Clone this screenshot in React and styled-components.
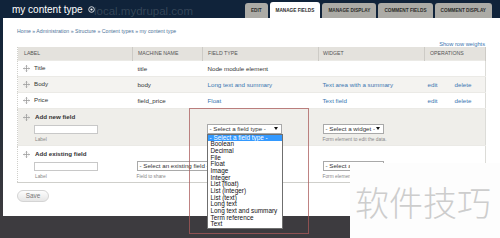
import React from 'react';
import styled, { createGlobalStyle } from 'styled-components';

const Global = createGlobalStyle`
  html, body { margin: 0; padding: 0; }
  body {
    width: 500px; height: 238px; overflow: hidden; background: #3d3b3f;
    font-family: "Liberation Sans", Arial, sans-serif;
  }
  * { box-sizing: border-box; }
`;

const Page = styled.div`
  position: relative;
  width: 500px;
  height: 238px;
  overflow: hidden;
  display: flex;
  flex-direction: column;
  background: linear-gradient(#10233a 0, #10233a 18px, #1f2a36 90px, #3d3b3f 216px);
`;

const Header = styled.header`
  flex: none;
  height: 18px;
  display: flex;
  justify-content: space-between;
  align-items: flex-end;
  padding: 0 8px 0 12px;
`;

const Title = styled.h1`
  margin: 0;
  align-self: center;
  padding-top: 1px;
  display: flex;
  align-items: center;
  gap: 5px;
  color: #fff;
  font-size: 10px;
  font-weight: normal;
  line-height: 10px;
`;

const Tabs = styled.nav`
  display: flex;
  align-items: flex-end;
  gap: 2px;
`;

const Tab = styled.a`
  height: ${p => (p.$active ? 16 : 15)}px;
  padding: 0 6px;
  display: flex;
  align-items: center;
  background: ${p => (p.$active ? '#fff' : '#acaba6')};
  color: #2b2b2b;
  font-size: 4.7px;
  font-weight: bold;
  text-transform: uppercase;
  border-radius: 3px 3px 0 0;
  white-space: nowrap;
`;

const Panel = styled.main`
  flex: none;
  margin-left: 3px;
  height: 198px;
  background: #fff;
  padding: 10px 15px 0 14px;
`;

const Breadcrumb = styled.div`
  font-size: 5.2px;
  line-height: 6px;
  color: #4d7299;
  margin-bottom: 7px;
  white-space: nowrap;
`;

const WeightsLink = styled.div`
  text-align: right;
  font-size: 5.7px;
  line-height: 6px;
  color: #3a76b0;
`;

const Table = styled.table`
  width: 468px;
  table-layout: fixed;
  border-collapse: collapse;
  font-size: 6.2px;
  color: #333;
  border-left: 1px dotted #cfcfcb;
  border-right: 1px solid #dcdcd8;
  border-bottom: 1px solid #cfcfcb;
`;

const Col = styled.col`
  width: ${p => p.$w}px;
`;

const Th = styled.th`
  height: 13px;
  padding: 0 0 0 ${p => p.$pl ?? 5}px;
  background: #e4e2dd;
  border-right: 1px solid #cdcbc6;
  text-align: left;
  font-weight: normal;
  font-size: 5.2px;
  color: #555;
  text-transform: uppercase;
  white-space: nowrap;
`;

const Tr = styled.tr`
  background: ${p => p.$bg || '#fff'};
  border-top: 1px solid #ebeae6;
`;

const Td = styled.td`
  height: ${p => p.$h || 16}px;
  padding: ${p => (p.$top ? '5px' : '0')} 0 0 ${p => p.$pl ?? 5}px;
  vertical-align: ${p => (p.$top ? 'top' : 'middle')};
  white-space: nowrap;
  overflow: visible;
  color: ${p => (p.$link ? '#3a76b0' : '#333')};
`;

const LabelLine = styled.div`
  display: flex;
  align-items: center;
  gap: ${p => p.$gap ?? 5}px;
  padding-left: 5px;
  line-height: 6px;
  font-weight: ${p => (p.$bold ? 'bold' : 'normal')};
  color: #333;
`;

const FormBlock = styled.div`
  padding-left: 16px;
  margin-top: 4px;
`;

const TextInput = styled.div`
  width: 64px;
  height: 9px;
  border: 1px solid #c8c8c8;
  background: #fff;
`;

const Desc = styled.div`
  margin-top: 3px;
  font-size: 4.8px;
  line-height: 5px;
  color: #888;
  padding-left: ${p => p.$pl ?? 1}px;
  white-space: nowrap;
`;

const FieldSpacer = styled.div`
  height: 10px;
`;

const SelectWrap = styled.div`
  position: relative;
  width: ${p => p.$w}px;
`;

const SelectBox = styled.div`
  height: 10px;
  border: 1px solid #a9a9a9;
  background: #fff;
  display: flex;
  align-items: center;
  justify-content: space-between;
  padding: 0 3px 0 2px;
  font-size: 6.2px;
  color: #333;
  white-space: nowrap;
  overflow: hidden;
`;

const ListBox = styled.ul`
  position: absolute;
  left: 0;
  top: 100%;
  z-index: 5;
  width: 76px;
  margin: 0;
  padding: 0;
  list-style: none;
  background: #fff;
  border: 1px solid #6f6f6f;
  font-size: 6.4px;
`;

const Option = styled.li`
  height: 6.7px;
  line-height: 6.7px;
  padding-left: ${p => (p.$sel ? 2 : 3)}px;
  background: ${p => (p.$sel ? '#3399ff' : 'transparent')};
  color: ${p => (p.$sel ? '#fff' : '#111')};
  white-space: nowrap;
`;

const SaveButton = styled.button`
  margin-top: 7px;
  width: 32px;
  height: 12px;
  padding: 0;
  border: 1px solid #d4d4d4;
  border-radius: 6px;
  background: linear-gradient(#fdfdfd, #e6e6e6);
  color: #777;
  font-family: inherit;
  font-size: 6.4px;
`;

const Annotation = styled.div`
  position: absolute;
  left: 189px;
  top: 108px;
  width: 120px;
  height: 126px;
  border: 1px solid rgba(170, 90, 90, 0.75);
  z-index: 6;
  pointer-events: none;
`;

const HostMark = styled.div`
  position: absolute;
  left: 94px;
  top: 5px;
  font-size: 11.5px;
  color: rgba(190, 195, 200, 0.22);
  z-index: 7;
  pointer-events: none;
`;

const Watermark = styled.div`
  position: absolute;
  left: 350px;
  top: 163px;
  right: 0;
  bottom: 0;
  z-index: 8;
  background: #fdfdfd;
  padding: 19px 0 0 5px;
  font-family: "Noto Sans CJK SC", sans-serif;
  font-size: 34px;
  font-weight: 300;
  line-height: 40px;
  color: #cdcdcd;
  white-space: nowrap;
`;

const Handle = () => (
  <svg width="7" height="7" viewBox="0 0 7 7" fill="none" stroke="#9a9a9a" strokeWidth="0.8">
    <path d="M3.5 0.5v6M0.5 3.5h6" />
    <path d="M2.6 1.3l0.9-0.9 0.9 0.9M2.6 5.7l0.9 0.9 0.9-0.9M1.3 2.6l-0.9 0.9 0.9 0.9M5.7 2.6l0.9 0.9-0.9 0.9" />
  </svg>
);

const ShortcutIcon = () => (
  <svg width="7" height="7" viewBox="0 0 7 7">
    <circle cx="3.5" cy="3.5" r="2.8" fill="none" stroke="#fff" strokeWidth="0.8" />
    <circle cx="3.5" cy="3.5" r="1.1" fill="#fff" />
  </svg>
);

const Caret = () => (
  <svg width="4" height="3" viewBox="0 0 4 3">
    <path d="M0 0h4L2 3z" fill="#111" />
  </svg>
);

const fieldTypes = [
  '- Select a field type -', 'Boolean', 'Decimal', 'File', 'Float', 'Image', 'Integer',
  'List (float)', 'List (integer)', 'List (text)', 'Long text', 'Long text and summary',
  'Term reference', 'Text',
];

const fields = [
  { label: 'Title', machine: 'title', type: 'Node module element', typeLink: false, widget: '', ops: false, bg: '#fff' },
  { label: 'Body', machine: 'body', type: 'Long text and summary', typeLink: true, widget: 'Text area with a summary', ops: true, bg: '#f4f3f0' },
  { label: 'Price', machine: 'field_price', type: 'Float', typeLink: true, widget: 'Text field', ops: true, bg: '#fff' },
];

const tabs = ['Edit', 'Manage fields', 'Manage display', 'Comment fields', 'Comment display'];

export default function App() {
  return (
    <Page>
      <Global />
      <Header>
        <Title>
          my content type
          <ShortcutIcon />
        </Title>
        <Tabs>
          {tabs.map(t => (
            <Tab key={t} $active={t === 'Manage fields'}>{t}</Tab>
          ))}
        </Tabs>
      </Header>
      <Panel>
        <Breadcrumb>Home » Administration » Structure » Content types » my content type</Breadcrumb>
        <WeightsLink>Show row weights</WeightsLink>
        <Table>
          <colgroup>
            <Col $w={115} />
            <Col $w={70} />
            <Col $w={116} />
            <Col $w={106} />
            <Col $w={26} />
            <Col $w={35} />
          </colgroup>
          <thead>
            <tr>
              <Th $pl={6}>Label</Th>
              <Th>Machine name</Th>
              <Th>Field type</Th>
              <Th $pl={4}>Widget</Th>
              <Th colSpan={2}>Operations</Th>
            </tr>
          </thead>
          <tbody>
            {fields.map(f => (
              <Tr key={f.label} $bg={f.bg}>
                <Td $pl={0}>
                  <LabelLine $gap={4}><Handle />{f.label}</LabelLine>
                </Td>
                <Td>{f.machine}</Td>
                <Td $link={f.typeLink}>{f.type}</Td>
                <Td $pl={4} $link>{f.widget}</Td>
                <Td $pl={3} $link>{f.ops ? 'edit' : ''}</Td>
                <Td $pl={4} $link>{f.ops ? 'delete' : ''}</Td>
              </Tr>
            ))}
            <Tr $bg="#efeeea">
              <Td $top $pl={0} $h={37}>
                <LabelLine $bold><Handle />Add new field</LabelLine>
                <FormBlock>
                  <TextInput />
                  <Desc>Label</Desc>
                </FormBlock>
              </Td>
              <Td $top />
              <Td $top $pl={4}>
                <FieldSpacer />
                <SelectWrap $w={75}>
                  <SelectBox>- Select a field type -<Caret /></SelectBox>
                  <ListBox>
                    {fieldTypes.map((t, i) => (
                      <Option key={t} $sel={i === 0}>{t}</Option>
                    ))}
                  </ListBox>
                </SelectWrap>
              </Td>
              <Td $top $pl={4} colSpan={3}>
                <FieldSpacer />
                <SelectWrap $w={61}>
                  <SelectBox>- Select a widget -<Caret /></SelectBox>
                </SelectWrap>
                <Desc $pl={0}>Form element to edit the data.</Desc>
              </Td>
            </Tr>
            <Tr>
              <Td $top $pl={0} $h={37}>
                <LabelLine $bold><Handle />Add existing field</LabelLine>
                <FormBlock>
                  <TextInput />
                  <Desc>Label</Desc>
                </FormBlock>
              </Td>
              <Td $top $pl={4} colSpan={2}>
                <FieldSpacer />
                <SelectWrap $w={100}>
                  <SelectBox>- Select an existing field -<Caret /></SelectBox>
                </SelectWrap>
                <Desc $pl={0}>Field to share</Desc>
              </Td>
              <Td $top $pl={4} colSpan={3}>
                <FieldSpacer />
                <SelectWrap $w={61}>
                  <SelectBox>- Select a widget -<Caret /></SelectBox>
                </SelectWrap>
                <Desc $pl={0}>Form element to edit the data.</Desc>
              </Td>
            </Tr>
          </tbody>
        </Table>
        <SaveButton>Save</SaveButton>
      </Panel>
      <HostMark>local.mydrupal.com</HostMark>
      <Annotation />
      <Watermark>软件技巧</Watermark>
    </Page>
  );
}
